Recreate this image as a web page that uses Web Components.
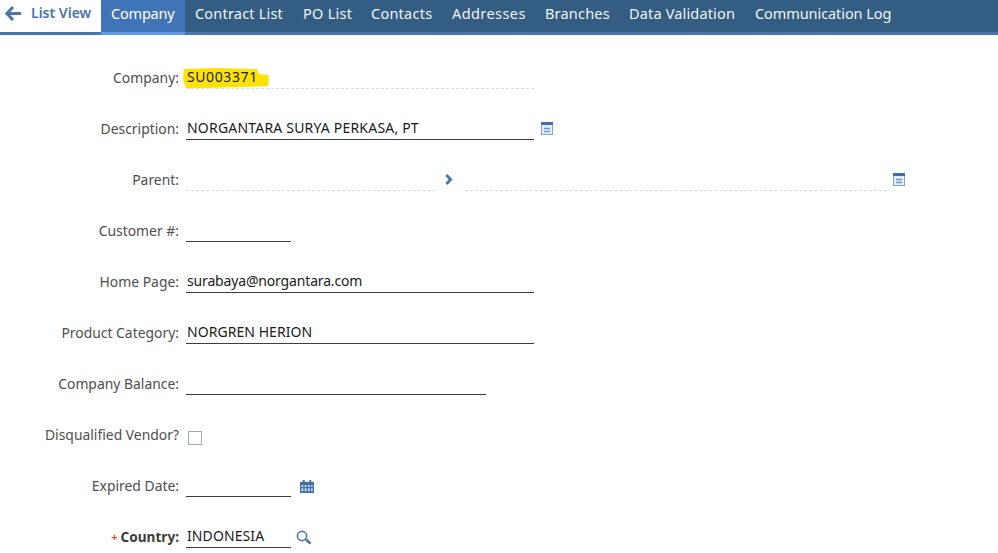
<!DOCTYPE html>
<html>
<head>
<meta charset="utf-8">
<title>Company</title>
<style>
html, body { margin: 0; padding: 0; background: #fff; overflow: hidden; height: 553px; }
body { font-family: "Noto Sans", "Open Sans", sans-serif; }
</style>
</head>
<body>
<nav-bar></nav-bar>
<form-panel>
  <form-row label="Company:"><text-field value="SU003371" width="348" spacing=".6" dashed marker></text-field></form-row>
  <form-row label="Description:"><text-field value="NORGANTARA SURYA PERKASA, PT" width="348" spacing=".2"></text-field><tool-icon kind="panel" gap="7"></tool-icon></form-row>
  <form-row label="Parent:"><text-field width="250" dashed></text-field><tool-icon kind="chevron" gap="8"></tool-icon><text-field width="422" dashed gap="12"></text-field><tool-icon kind="panel" gap="6"></tool-icon></form-row>
  <form-row label="Customer #:"><text-field width="105"></text-field></form-row>
  <form-row label="Home Page:"><text-field value="surabaya@norgantara.com" width="348" spacing="-.16"></text-field></form-row>
  <form-row label="Product Category:"><text-field value="NORGREN HERION" width="348" spacing=".05"></text-field></form-row>
  <form-row label="Company Balance:"><text-field width="300"></text-field></form-row>
  <form-row label="Disqualified Vendor?"><check-box></check-box></form-row>
  <form-row label="Expired Date:"><text-field width="105"></text-field><tool-icon kind="calendar" gap="9"></tool-icon></form-row>
  <form-row label="Country:" required><text-field value="INDONESIA" width="105" spacing=".1"></text-field><tool-icon kind="search" gap="5"></tool-icon></form-row>
</form-panel>

<script>
// top tab strip: label, box width, letter spacing
const TABS = [
    ['Company', 84, -.2],
    ['Contract List', 108, .2],
    ['PO List', 68, .28],
    ['Contacts', 81, .24],
    ['Addresses', 93, .42],
    ['Branches', 84, .2],
    ['Data Validation', 126, .16],
    ['Communication Log', 170, -.08]
];

class NavBar extends HTMLElement {
    constructor() {
        super();
        this.attachShadow({mode: 'open'});
        const tabs = TABS.map((t, i) => `<a class="tab${i === 0 ? ' on' : ''}" style="width:${t[1]}px;letter-spacing:${t[2]}px">${t[0]}</a>`).join('');
        this.shadowRoot.innerHTML = `
        <style>
        :host { display: flex; height: 35px; box-sizing: border-box; font-family: "Noto Sans", sans-serif; }
        .back { width: 101px; flex: none; display: flex; align-items: center; box-sizing: border-box; padding: 0 0 8px 5px; border-bottom: 3px solid #4a76ac; color: #4a76ac; font-size: 14px; font-weight: 600; gap: 10px; }
        .back svg { margin-top: 2px; }
        .strip { flex: 1; display: flex; background: #335d82; border-bottom: 3px solid #4a76ac; }
        .tab { display: flex; flex: none; box-sizing: border-box; align-items: center; padding: 0 0 7px 10px; color: #eef4f8; font-size: 14.5px; white-space: nowrap; }
        .tab.on { background: #3f74b6; color: #fff; margin-bottom: -3px; border-bottom: 3px solid #5c9ce2; }
        </style>
        <div class="back">
            <svg width="16" height="15" viewBox="0 0 16 15"><path d="M8 1 1.8 7.5 8 14M2.5 7.5H16" fill="none" stroke="#4a76ac" stroke-width="3"/></svg>
            <span>List View</span>
        </div>
        <div class="strip">${tabs}</div>`;
    }
}

class FormPanel extends HTMLElement {
    constructor() {
        super();
        this.attachShadow({mode: 'open'});
        this.shadowRoot.innerHTML = `
        <style>
        :host { display: grid; grid-auto-rows: 51px; padding-top: 17px; font-family: "Noto Sans", sans-serif; }
        </style>
        <slot></slot>`;
    }
}

class FormRow extends HTMLElement {
    constructor() {
        super();
        this.attachShadow({mode: 'open'});
        const req = this.hasAttribute('required');
        this.shadowRoot.innerHTML = `
        <style>
        :host { display: grid; grid-template-columns: 179px 1fr; column-gap: 7px; align-items: start; height: 51px; }
        .lbl { height: 35px; display: flex; justify-content: flex-end; align-items: flex-end; box-sizing: border-box; line-height: 19px; padding-top: 14px; color: #4e4e4e; font-size: 13.9px; white-space: nowrap; }
        .req { color: #d0541c; font-size: 11px; font-weight: 700; margin-right: 3px; }
        .lbl.r { font-weight: 700; color: #3c3c3c; font-size: 13.6px; }
        .cell { display: flex; align-items: flex-start; height: 37px; }
        </style>
        <div class="lbl${req ? ' r' : ''}">${req ? '<span class="req">+</span>' : ''}${this.getAttribute('label')}</div>
        <div class="cell"><slot></slot></div>`;
    }
}

class TextField extends HTMLElement {
    constructor() {
        super();
        this.attachShadow({mode: 'open'});
        const w = this.getAttribute('width');
        const gap = this.getAttribute('gap') || 0;
        const dashed = this.hasAttribute('dashed');
        const marker = this.hasAttribute('marker');
        this.shadowRoot.innerHTML = `
        <style>
        :host { display: block; position: relative; width: ${w}px; height: 37px; margin-left: ${gap}px; flex: none; box-sizing: border-box; padding-top: 16px; }
        .box { height: 20px; line-height: 18px; padding-left: 1px; font-size: 14px; letter-spacing: ${this.getAttribute('spacing') || 0}px; color: #1a1a1a; white-space: nowrap; border-bottom: 1px ${dashed ? 'dashed #dcdcdc' : 'solid #3e3e3e'}; position: relative; }
        .mark { position: absolute; left: -3px; top: 16px; }
        </style>
        ${marker ? '<svg class="mark" width="86" height="21" viewBox="0 0 86 21"><path d="M1 1 30 0 74 1 76 6 85 7 86 12 85 18 60 19 20 20 3 20 0 11Z" fill="#ffe300"/></svg>' : ''}
        <div class="box">${this.getAttribute('value') || ''}</div>`;
    }
}

const ICONS = {
    panel: `<svg width="12" height="13" viewBox="0 0 12 13"><rect x=".5" y=".5" width="11" height="12" fill="#e4edf7" stroke="#7fa3cf"/><rect x="0" y="0" width="12" height="3" fill="#3f6ea8"/><path d="M3 6.5h6M3 9.5h6" stroke="#6d96c8" stroke-width="1.3"/></svg>`,
    chevron: `<svg width="9" height="11" viewBox="0 0 9 11"><path d="M2.4 1 6.6 5.5 2.4 10" fill="none" stroke="#4a76ac" stroke-width="2.7"/></svg>`,
    calendar: `<svg width="14" height="13" viewBox="0 0 15 14"><path d="M0 2h15v12H0z" fill="#3f6ea8"/><path d="M3 0h2v3H3zM10 0h2v3h-2z" fill="#3f6ea8"/><path d="M1.5 5.5h2v2h-2zM5 5.5h2v2H5zM8.5 5.5h2v2h-2zM12 5.5h1.5v2H12zM1.5 9h2v3h-2zM5 9h2v3H5zM8.5 9h2v3h-2zM12 9h1.5v3H12z" fill="#cfe0f2"/></svg>`,
    search: `<svg width="16" height="15" viewBox="0 0 16 15"><circle cx="6" cy="6" r="4.6" fill="none" stroke="#4a7fc0" stroke-width="1.7"/><path d="M10 9.6 14.5 13.6" stroke="#3f6ea8" stroke-width="2.6"/></svg>`
};
const ICON_TOP = {panel: 19, chevron: 20, calendar: 20, search: 19};

class ToolIcon extends HTMLElement {
    constructor() {
        super();
        this.attachShadow({mode: 'open'});
        const kind = this.getAttribute('kind');
        this.shadowRoot.innerHTML = `
        <style>
        :host { display: block; flex: none; margin-left: ${this.getAttribute('gap') || 0}px; padding-top: ${ICON_TOP[kind]}px; line-height: 0; }
        </style>
        ${ICONS[kind]}`;
    }
}

class CheckBox extends HTMLElement {
    constructor() {
        super();
        this.attachShadow({mode: 'open'});
        this.shadowRoot.innerHTML = `
        <style>
        :host { display: block; margin: 22px 0 0 2px; width: 14px; height: 14px; box-sizing: border-box; border: 1px solid #a8a8a8; background: #fff; }
        </style>`;
    }
}

customElements.define('nav-bar', NavBar);
customElements.define('form-panel', FormPanel);
customElements.define('form-row', FormRow);
customElements.define('text-field', TextField);
customElements.define('tool-icon', ToolIcon);
customElements.define('check-box', CheckBox);
</script>
</body>
</html>
